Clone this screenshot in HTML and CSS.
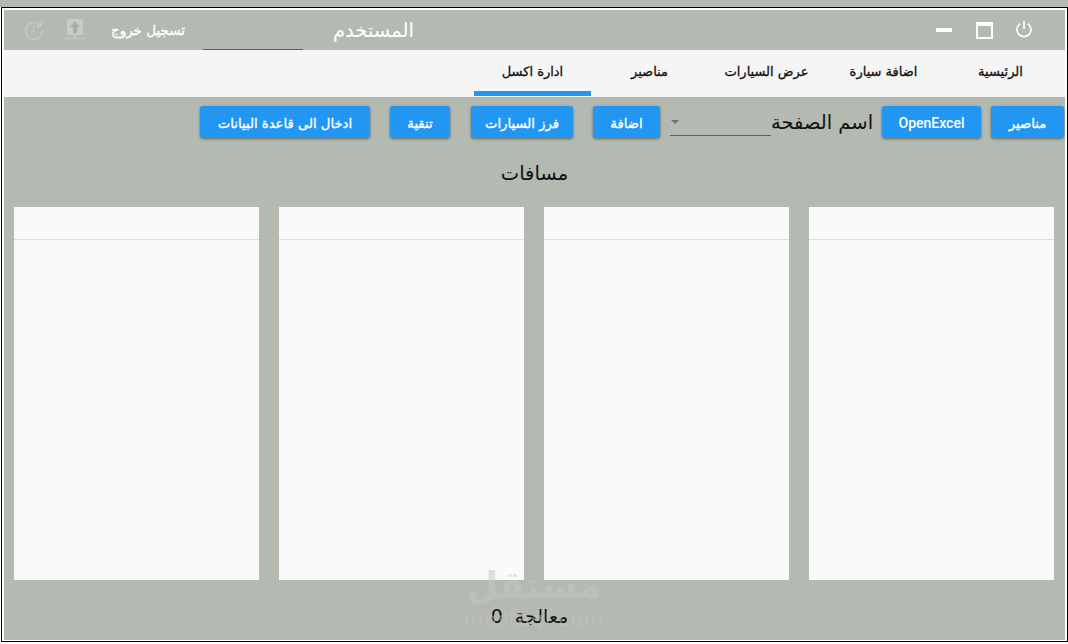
FILE: index.html
```html
<!DOCTYPE html>
<html lang="ar">
<head>
<meta charset="utf-8">
<title>ادارة اكسل</title>
<link rel="stylesheet" href="styles.css">
</head>
<body>
<div class="window">
  <header class="topbar">
    <svg class="ic-hist" viewBox="0 0 20 20" width="20" height="20"><path d="M16.500 5.500A8.400 8.400 0 1 0 18.400 10" fill="none" stroke="#c2c6c0" stroke-width="1.800"/><path d="M18 1v6.200h-6.200z" fill="#c2c6c0"/><path d="M10 5v5.400l-3.400 2.200" fill="none" stroke="#c2c6c0" stroke-width="1.600"/></svg>
    <svg class="ic-up" viewBox="0 0 22 22" width="22" height="22"><path d="M4.500 0h13a1.500 1.500 0 0 1 1.500 1.500v13a1.500 1.500 0 0 1-1.500 1.500h-13A1.500 1.500 0 0 1 3 14.500v-13A1.500 1.500 0 0 1 4.500 0z" fill="#c8cbc6"/><path d="M11 2.500l5 5.500h-3v6H9V8H6z" fill="#a8aea6"/><path d="M11 16v3M1 19.500h20" stroke="#c8cbc6" stroke-width="1.600" stroke-dasharray="2 .6" fill="none"/></svg>
    <span class="logout">تسجيل خروج</span>
    <span class="user-input"></span>
    <span class="user-label">المستخدم</span>
    <span class="bar-fill"></span>
    <svg class="ic-min" viewBox="0 0 16 4" width="16" height="4"><rect width="16" height="4" fill="#fff"/></svg>
    <svg class="ic-max" viewBox="0 0 17 17" width="17" height="17"><path d="M1 1h15v15H1z" fill="none" stroke="#fff" stroke-width="2"/><path d="M1 3h15" stroke="#fff" stroke-width="2"/></svg>
    <svg class="ic-pow" viewBox="0 0 18 18" width="18" height="18"><path d="M9 1v8" stroke="#fff" stroke-width="1.700" fill="none"/><path d="M5.300 3.600a7 7 0 1 0 7.400 0" stroke="#fff" stroke-width="1.700" fill="none"/></svg>
  </header>
  <nav class="tabs">
    <a class="tab active">ادارة اكسل</a>
    <a class="tab">مناصير</a>
    <a class="tab">عرض السيارات</a>
    <a class="tab">اضافة سيارة</a>
    <a class="tab">الرئيسية</a>
  </nav>
  <main class="content">
    <div class="actions">
      <button class="btn b-db">ادخال الى قاعدة البيانات</button>
      <button class="btn b-clean">تنقية</button>
      <button class="btn b-sort">فرز السيارات</button>
      <button class="btn b-add">اضافة</button>
      <span class="select"><i class="caret"></i></span>
      <span class="sheet-label">اسم الصفحة</span>
      <button class="btn b-open">OpenExcel</button>
      <button class="btn b-man">مناصير</button>
    </div>
    <h1 class="title">مسافات</h1>
    <section class="cards">
      <div class="card"><div class="card-head"></div></div>
      <div class="card"><div class="card-head"></div></div>
      <div class="card"><div class="card-head"></div></div>
      <div class="card"><div class="card-head"></div></div>
    </section>
    <footer class="status"><span>0</span><span>معالجة</span></footer>
    <div class="watermark"><div class="wm-ar">مستقل</div><div class="wm-en">mostaql.com</div></div>
  </main>
</div>
</body>
</html>
```
FILE: styles.css
```css
* { box-sizing: border-box; }
html, body { margin: 0; padding: 0; }
body {
  width: 1068px;
  height: 644px;
  overflow: hidden;
  padding-top: 7px;
  font-family: "DejaVu Sans", "Noto Sans", sans-serif;
  background: linear-gradient(#b4bab2 7px, #fff 7px);
}
.window {
  width: 1067px;
  height: 635px;
  margin-left: 1px;
  border: 1px solid #000;
  padding: 2px 2px 1px 2px;
  background: #fff;
  display: flex;
  flex-direction: column;
}
.topbar {
  height: 40px;
  flex: none;
  background: #b4bab2;
  display: flex;
  align-items: center;
  color: #fff;
}
.ic-hist { margin-left: 20px; flex: none; }
.ic-up { margin-left: 20px; margin-top: -1px; flex: none; }
.logout { margin-left: 24px; width: 76px; font-size: 13.500px; -webkit-text-stroke: .35px #fff; white-space: nowrap; text-align: center; }
.user-input { margin-left: 17px; width: 100px; height: 40px; border-bottom: 1px solid #5c6259; flex: none; }
.user-label { margin-left: 30px; width: 80px; font-size: 19.500px; white-space: nowrap; text-align: center; }
.bar-fill { flex: 1; }
.ic-min { margin-right: 24px; flex: none; }
.ic-max { margin-right: 22px; flex: none; }
.ic-pow { margin-right: 32px; margin-top: -2px; flex: none; }
.tabs {
  height: 47px;
  flex: none;
  background: #f5f5f5;
  display: flex;
  justify-content: flex-end;
  padding-right: 6px;
}
.tab {
  width: 117px;
  height: 47px;
  padding-top: 14px;
  font-size: 13px;
  -webkit-text-stroke: .3px #111;
  text-align: center;
  color: #111;
  white-space: nowrap;
}
.tab.active { border-bottom: 5px solid #2196f3; height: 46px; }
.content {
  flex: 1;
  position: relative;
  background: #b4bab2;
  display: flex;
  flex-direction: column;
  overflow: hidden;
}
.actions {
  display: flex;
  align-items: flex-start;
  padding: 9px 0 0 196px;
  height: 57px;
  flex: none;
}
.btn {
  height: 32px;
  border: 0;
  border-radius: 3px;
  padding: 2px 0 0;
  background: #2196f3;
  color: #fff;
  font-family: "DejaVu Sans", "Noto Sans", sans-serif;
  font-size: 13.200px;
  -webkit-text-stroke: .35px #fff;
  box-shadow: 0 1px 3px rgba(0,0,0,.45);
  white-space: nowrap;
  flex: none;
}
.b-db { width: 170px; }
.b-clean { width: 60px; margin-left: 20px; }
.b-sort { width: 102px; margin-left: 21px; }
.b-add { width: 67px; margin-left: 20px; }
.b-open { width: 99px; margin-left: 9px; font-family: Roboto, sans-serif; font-size: 14px; font-weight: 500; -webkit-text-stroke: 0; }
.b-man { width: 73px; margin-left: 10px; }
.select {
  position: relative;
  width: 101px;
  height: 30px;
  margin-left: 10px;
  border-bottom: 1px solid #5c6259;
  flex: none;
}
.caret {
  position: absolute;
  left: 1px;
  top: 14px;
  border-left: 4px solid transparent;
  border-right: 4px solid transparent;
  border-top: 4px solid #6d726b;
}
.sheet-label { width: 102px; font-size: 19.500px; line-height: 34px; color: #111; white-space: nowrap; text-align: center; flex: none; }
.title {
  margin: 0;
  height: 53px;
  flex: none;
  text-align: center;
  font-size: 19.500px;
  font-weight: 400;
  line-height: 40px;
  color: #111;
}
.cards {
  display: flex;
  gap: 20px;
  padding: 0 10px;
  height: 373px;
  flex: none;
}
.card { width: 245px; background: #fafafa; }
.card-head { height: 33px; border-bottom: 1px solid #dcdcdc; }
.status {
  display: flex;
  justify-content: center;
  gap: 12px;
  padding-top: 24px;
  padding-right: 10px;
  font-size: 19px;
  line-height: 24px;
  color: #111;
}
.watermark {
  position: absolute;
  left: 450px;
  top: 466px;
  width: 160px;
  text-align: center;
  color: #c3c6c2;
  opacity: .5;
  pointer-events: none;
}
.wm-ar { font-size: 37px; font-weight: 700; line-height: 46px; }
.wm-en { font-size: 20px; line-height: 20px; letter-spacing: 1px; }
```
